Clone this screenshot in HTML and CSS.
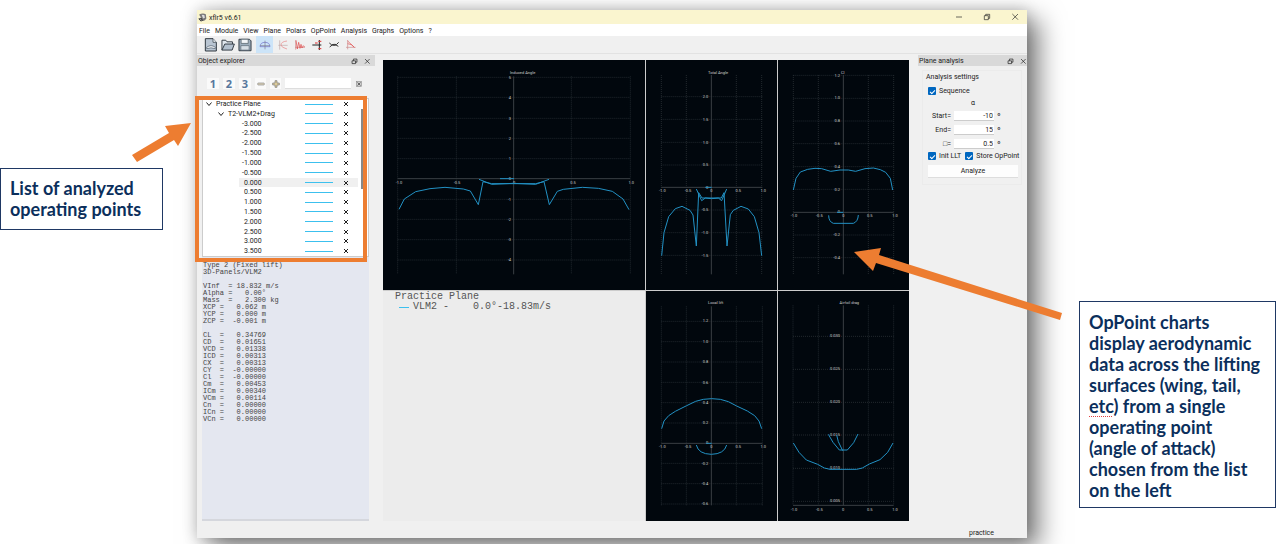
FILE: index.html
```html
<!DOCTYPE html>
<html lang="en">
<head>
<meta charset="utf-8">
<title>xflr5 operating points</title>
<link rel="stylesheet" href="styles.css">
</head>
<body>
<main class="slide">
  <aside class="side side-left"><p class="note">List of analyzed operating points</p></aside>

  <section class="window">
    <header class="titlebar">
      <svg class="logo" viewBox="0 0 30 30"><path d="M4 5q12-6 22-1l2 14q-4 8-11 9l-7-5q-8 0-9-5 6 0 10-3Q6 12 4 5z" fill="#777"/><path d="M12 6l9 1 2 9-6 2z" fill="#ddd"/><path d="M2 20l9-3 6 8-7 3z" fill="#333"/><path d="M7 19l5 6" stroke="#fff" stroke-width="2"/></svg>
      <span class="app-name">xflr5 v6.61</span>
      <div class="win-controls">
        <button aria-label="Minimize"><svg viewBox="0 0 24 24"><path d="M3 12h18"/></svg></button>
        <button aria-label="Restore"><svg viewBox="0 0 24 24"><path d="M4 8h12v12H4zM8 8V4h12v12h-4"/></svg></button>
        <button aria-label="Close"><svg viewBox="0 0 24 24"><path d="M4 3l17 17M21 3L4 20"/></svg></button>
      </div>
    </header>
    <nav class="menubar">
      <button>File</button><button>Module</button><button>View</button><button>Plane</button><button>Polars</button><button>OpPoint</button><button>Analysis</button><button>Graphs</button><button>Options</button><button>?</button>
    </nav>
    <div class="toolbar">
      <button class="file" aria-label="New"><svg viewBox="0 0 40 42"><path d="M3 2h23l10 11v26H3z" fill="#b9c5d2" stroke="#303941" stroke-width="3"/><path d="M26 2v11h10" fill="#e9eef3" stroke="#303941" stroke-width="2"/><path d="M7 28q13-10 26 0v4q-13-5-26 0z" fill="#f4f7fa" stroke="#4b5966"/></svg></button>
      <button class="file" aria-label="Open"><svg viewBox="0 0 44 42"><path d="M3 37V6h12l4 5h17v7" fill="#dfe6ed" stroke="#303941" stroke-width="3"/><path d="M3 37l9-19h30l-7 19z" fill="#b3c0ce" stroke="#303941" stroke-width="3"/></svg></button>
      <button class="file" aria-label="Save"><svg viewBox="0 0 44 42"><path d="M3 3h33l5 5v31H3z" fill="#9daebd" stroke="#303941" stroke-width="3"/><path d="M10 3h22v13H10z" fill="#f2f5f8" stroke="#43505b" stroke-width="2"/><path d="M9 23h26v14H9z" fill="#d7dfe6" stroke="#53616d"/></svg></button>
      <button class="view on" aria-label="Operating point view"><svg viewBox="0 0 36 36"><path d="M3 23q1-13 15-13t15 13z" stroke="#6c6cc8"/><path d="M18 5v26M3 20h30" stroke="#7d7d8d"/></svg></button>
      <button class="view" aria-label="Polar view"><svg viewBox="0 0 36 36"><path d="M8 4v28M4 19h28" stroke="#c0a8a8"/><path d="M30 6Q12 8 12 18q0 7 18 12" stroke="#e78282"/></svg></button>
      <button class="view" aria-label="Time response"><svg viewBox="0 0 36 36"><path d="M5 4v28M3 25h30" stroke="#cf8080"/><path d="M6 4l4 26 4-20 4 18 3-12 3 11 4-7 4 4" stroke="#e04444"/></svg></button>
      <button class="view" aria-label="Stability"><svg viewBox="0 0 36 36"><path d="M25 3v30M4 18h27" stroke="#222" stroke-width="3"/><path d="M12 12h8M22 7h9M22 29h9" stroke="#d33" stroke-width="3"/></svg></button>
      <button class="view" aria-label="Cp view"><svg viewBox="0 0 36 36"><path d="M4 12q7 9 14 4 8 4 14-6M5 24q8-9 13-5 6-3 13 3" stroke="#333" stroke-width="3"/></svg></button>
      <button class="view" aria-label="Cp graph"><svg viewBox="0 0 36 36"><path d="M8 3v28M3 25h29" stroke="#c88"/><path d="M8 6l20 19M8 14q13 1 20 11" stroke="#e34d4d"/></svg></button>
    </div>

    <div class="workspace">
      <section class="dock explorer">
        <header class="dock-head"><h2>Object explorer</h2>
          <button aria-label="Float"><svg viewBox="0 0 20 20"><path d="M3 8h10v8H3zM7 8V3h10v9h-4"/></svg></button>
          <button aria-label="Close"><svg viewBox="0 0 20 20"><path d="M3 3l13 13M16 3L3 16"/></svg></button>
        </header>
        <div class="filter">
          <button>1</button><button>2</button><button>3</button><button class="sign" aria-label="Collapse"><svg viewBox="0 0 24 24"><rect x="2" y="9" width="20" height="6" rx="2" fill="#ddd3b8" stroke="#888"/></svg></button><button class="sign" aria-label="Expand"><svg viewBox="0 0 24 24"><path d="M9 2h6v7h7v6h-7v7H9v-7H2V9h7z" fill="#dccb9b" stroke="#777" stroke-width="2"/></svg></button>
          <input type="text" aria-label="Filter">
          <button class="clear" aria-label="Clear filter"><svg viewBox="0 0 20 20"><rect x="2" y="2" width="16" height="16" fill="#ccc" stroke="#888"/><path d="M5 5l10 10M15 5L5 15"/></svg></button>
        </div>
        <div class="tree-area">
          <ul class="tree" id="tree"></ul>
          <div class="scroll"></div>
          <div class="highlight"></div>
        </div>
        <pre class="details">Type 2 (Fixed lift)
3D-Panels/VLM2

VInf  = 18.832 m/s
Alpha =   0.00°
Mass  =   2.300 kg
XCP =   0.062 m
YCP =   0.000 m
ZCP =  -0.001 m

CL  =   0.34769
CD  =   0.01651
VCD =   0.01338
ICD =   0.00313
CX  =   0.00313
CY  =  -0.00000
Cl  =  -0.00000
Cm  =   0.00453
ICm =   0.00340
VCm =   0.00114
Cn  =   0.00000
ICn =   0.00000
VCn =   0.00000</pre>
      </section>

      <section class="charts">
        <svg class="chart" viewBox="9 15 786 690">
          <path class="grid" d="M53 67H750M53 127H750M53 190H750M53 250H750M53 311H750M53 433H750M53 493H750M53 554H750M53 615H750M53 64V658M229 64V658M574 64V658M751 64V658"/>
          <path class="axis" d="M53 371H750M401 64V658"/>
          <g class="ticks mid"><text x="428" y="56">Induced Angle</text><text x="57" y="387">-1.0</text><text x="231" y="387">-0.5</text><text x="402" y="387">0</text><text x="579" y="387">0.5</text><text x="754" y="387">1.0</text></g>
          <g class="ticks"><text x="393" y="71">5</text><text x="393" y="131">4</text><text x="393" y="194">3</text><text x="393" y="254">2</text><text x="393" y="315">1</text><text x="393" y="375">0</text><text x="393" y="437">-1</text><text x="393" y="497">-2</text><text x="393" y="558">-3</text><text x="393" y="619">-4</text></g>
          <path class="curve" d="M57 463L73 432 107 410 150 401 195 397 250 402 271 408 295 449 309 380 335 386H467L492 380 508 449 532 409 550 403 607 397 655 400 697 409 729 432 747 464M297 373L335 388 400 385 467 388 507 373M360 371H402"/>
        </svg>
        <svg class="chart" viewBox="3 15 393 690">
          <path class="grid" d="M49 125H352M49 193H352M49 262H352M49 330H352M49 465H352M49 533H352M49 601H352M49 60V658M124 60V658M274 60V658M350 60V658"/>
          <path class="axis" d="M49 397H352M199 60V658"/>
          <g class="ticks mid"><text x="219" y="56">Total Angle</text><text x="52" y="412">-1.0</text><text x="129" y="412">-0.5</text><text x="199" y="412">0</text><text x="280" y="412">0.5</text><text x="355" y="412">1.0</text></g>
          <g class="ticks"><text x="190" y="129">2.0</text><text x="190" y="197">1.5</text><text x="190" y="266">1.0</text><text x="190" y="334">0.5</text><text x="190" y="401">0</text><text x="190" y="469">-0.5</text><text x="190" y="537">-1.0</text><text x="190" y="605">-1.5</text></g>
          <path class="curve" d="M50 602L57 533 71 485 91 461 111 454 135 466 144 480 154 573 161 413 171 429H229L237 413 246 573 256 479 265 466 288 454 310 462 328 485 342 533 350 602M154 402L170 437 181 429 200 431 220 429 230 437 245 402M181 397H200"/>
        </svg>
        <svg class="chart" viewBox="399 15 393 690">
          <path class="grid" d="M445 61H746M445 130H746M445 198H746M445 266H746M445 335H746M445 403H746M445 540H746M445 608H746M445 60V658M520 60V658M670 60V658M746 60V658"/>
          <path class="axis" d="M445 472H746M595 60V658"/>
          <g class="ticks mid"><text x="593" y="56">Cl</text><text x="447" y="487">-1.0</text><text x="523" y="487">-0.5</text><text x="595" y="487">0</text><text x="674" y="487">0.5</text><text x="750" y="487">1.0</text></g>
          <g class="ticks"><text x="585" y="65">1.2</text><text x="585" y="133">1.0</text><text x="585" y="202">0.8</text><text x="585" y="270">0.6</text><text x="585" y="338">0.4</text><text x="585" y="407">0.2</text><text x="585" y="475">0</text><text x="585" y="543">-0.2</text><text x="585" y="612">-0.4</text></g>
          <path class="curve" d="M445 405L453 370 466 351 488 343 510 340 530 341 557 349 585 345H610L632 349 660 341 685 339 706 344 722 352 736 370 743 405M551 481Q551 500 565 505H625Q639 500 640 480M576 472H595"/>
        </svg>
        <div class="legend"><p>Practice Plane</p><p class="series"><span class="swatch"></span>VLM2 -&nbsp;&nbsp;&nbsp; 0.0°-18.83m/s</p></div>
        <svg class="chart" viewBox="3 9 393 690">
          <path class="grid" d="M49 100H352M49 161H352M49 222H352M49 283H352M49 344H352M49 405H352M49 526H352M49 587H352M49 648H352M49 55V652M124 55V652M274 55V652M352 55V652"/>
          <path class="axis" d="M49 466H352M199 55V652"/>
          <g class="ticks mid"><text x="212" y="49">Local lift</text><text x="52" y="480">-1.0</text><text x="129" y="480">-0.5</text><text x="199" y="480">0</text><text x="280" y="480">0.5</text><text x="355" y="480">1.0</text></g>
          <g class="ticks"><text x="190" y="103">1.2</text><text x="190" y="165">1.0</text><text x="190" y="226">0.8</text><text x="190" y="287">0.6</text><text x="190" y="348">0.4</text><text x="190" y="409">0.2</text><text x="190" y="469">0</text><text x="190" y="530">-0.2</text><text x="190" y="591">-0.4</text><text x="190" y="651">-0.6</text></g>
          <path class="curve" d="M50 422L57 399 71 383 91 370 125 353 152 340 175 334 200 332 226 334 250 341 275 354 307 369 329 383 342 399 350 422M154 471Q160 498 199 499 238 498 245 471M184 466H200"/>
        </svg>
        <svg class="chart" viewBox="399 9 393 690">
          <path class="grid" d="M444 145H746M444 244H746M444 343H746M444 441H746M444 541H746M444 640H746M444 52V652M520 52V652M670 52V652M746 52V652"/>
          <path class="axis" d="M444 652H746M595 52V652"/>
          <g class="ticks mid"><text x="613" y="49">Airfoil drag</text><text x="447" y="668">-1.0</text><text x="523" y="668">-0.5</text><text x="594" y="668">0</text><text x="674" y="668">0.5</text><text x="750" y="668">1.0</text></g>
          <g class="ticks"><text x="585" y="148">0.030</text><text x="585" y="247">0.025</text><text x="585" y="346">0.020</text><text x="585" y="445">0.015</text><text x="585" y="544">0.010</text><text x="585" y="642">0.005</text></g>
          <path class="curve" d="M445 465L462 493 484 516 518 529 538 540 555 544H635L652 540 673 528 705 515 728 493 744 465M550 439L564 463 583 486H607L626 464 639 438M575 441L580 461 593 488"/>
        </svg>
      </section>

      <section class="dock analysis">
        <header class="dock-head"><h2>Plane analysis</h2>
          <button aria-label="Float"><svg viewBox="0 0 20 20"><path d="M3 8h10v8H3zM7 8V3h10v9h-4"/></svg></button>
          <button aria-label="Close"><svg viewBox="0 0 20 20"><path d="M3 3l13 13M16 3L3 16"/></svg></button>
        </header>
        <form class="settings">
          <h3>Analysis settings</h3>
          <label class="check"><input type="checkbox" checked>Sequence</label>
          <p class="alpha">α</p>
          <div class="field"><label for="start">Start=</label><input id="start" type="text" value="-10"><span>°</span></div>
          <div class="field"><label for="end">End=</label><input id="end" type="text" value="15"><span>°</span></div>
          <div class="field"><label for="step">□=</label><input id="step" type="text" value="0.5"><span>°</span></div>
          <div class="checks"><label class="check"><input type="checkbox" checked>Init LLT</label><label class="check"><input type="checkbox" checked>Store OpPoint</label></div>
          <button class="analyze" type="button">Analyze</button>
        </form>
      </section>
    </div>
    <footer class="status">practice</footer>

    <svg class="arrow arrow-list" viewBox="131 122 62 42"><path d="M191 123L165 126 169 133 132 155 137 162 174 140 178 146z"/></svg>
    <svg class="arrow arrow-chart" viewBox="853 246 210 76"><path d="M854 252L881 248 879 255 1062 313 1060 320 876 263 873 271z"/></svg>
  </section>

  <aside class="side side-right"><p class="note">OpPoint charts display aerodynamic data across the lifting surfaces (wing, tail, <span class="typo">etc</span>) from a single operating point (angle of attack) chosen from the list on the left</p></aside>
</main>
<script src="tree.js"></script>
</body>
</html>
```
FILE: styles.css
```css
* { box-sizing: border-box; }
body { margin: 0; background: #fff; overflow: hidden; font-family: Roboto, "Open Sans", sans-serif; font-size: 7px; line-height: 10px; color: #222; }
h2, h3, p, ul, pre { margin: 0; padding: 0; font-size: inherit; font-weight: 400; }
button, input { font: inherit; color: inherit; padding: 0; border: 0; background: none; }
svg { display: block; }
button svg { fill: none; stroke: #222; stroke-width: 2; }

.slide { display: flex; padding-top: 10px; min-height: 544px; align-items: flex-start; }
.side { flex: none; }
.side-left { width: 197px; padding: 158px 34px 0 0; }
.side-right { width: 253px; padding: 291px 4px 0 52px; }
.note { padding: 9px 14px 9px 9px; border: 1px solid #1f3864; background: #fff; color: #0b2f5c; font-family: Lato, sans-serif; font-weight: 700; font-size: 18px; line-height: 21px; }
.side-right .note { padding-bottom: 6px; padding-top: 10px; }
.typo { text-decoration: underline dotted #e04040 1px; text-underline-offset: 3px; }

.window { position: relative; flex: 1; min-width: 0; background: #f0f0f0; box-shadow: 12px 10px 24px rgba(0, 0, 0, .5), 0 0 14px rgba(0, 0, 0, .2); }
.titlebar { display: flex; align-items: center; gap: 2px; height: 14px; padding-left: 1px; background: #faf5cf; }
.logo { width: 9px; height: 9px; }
.app-name { flex: 1; padding-top: 1px; }
.win-controls { display: flex; gap: 20px; padding-right: 8px; }
.win-controls svg { width: 8px; height: 8px; }
.menubar { display: flex; gap: 5px; height: 12px; padding: 1px 0 0 2px; background: #fff; }
.toolbar { display: flex; align-items: center; gap: 3px; height: 18px; padding-left: 7px; border-bottom: 1px solid #e2e2e2; }
.file svg { width: 14px; height: 14px; }
.view { display: grid; place-items: center; width: 14px; height: 17px; }
.view svg { width: 12px; height: 12px; }
.on { width: 17px; margin-left: 1px; background: #cce4f8; }

.workspace { display: flex; align-items: stretch; padding-top: 1px; }
.dock { flex: none; }
.explorer { display: flex; flex-direction: column; width: 178px; }
.dock-head { display: flex; align-items: center; gap: 6px; height: 11px; padding: 1px 4px 0 1px; background: #d9d9d9; }
.dock-head h2 { flex: 1; }
.dock-head svg { width: 7px; height: 7px; }
.analysis .dock-head { padding-right: 0; }
.filter { display: flex; align-items: center; gap: 4px; padding: 12px 12px 0 10px; }
.filter button { display: grid; place-items: center; width: 12px; height: 11px; background: #fafafa; font: 700 11px/11px "Noto Sans", sans-serif; color: #58779c; }
.filter .sign { width: 11px; }
.filter svg { width: 8px; height: 8px; }
.filter input { flex: 1; min-width: 0; height: 11px; background: #fff; border-bottom: 1px solid #ddd; }
.filter .clear { width: 8px; background: none; }
.filter .clear svg { width: 6px; height: 6px; }

.tree-area { position: relative; margin: 9px 6px 0 5px; background: #fff; border: 1px solid #ccc; }
.tree { display: grid; grid-auto-rows: minmax(0, 1fr); height: 157px; line-height: 10px; list-style: none; }
.tree li { display: grid; grid-template-columns: 37px 1fr 28px 25px; align-items: center; padding-right: 10px; }
.tree .name { grid-column: 1 / 3; display: flex; align-items: center; gap: 4px; padding-left: 3px; }
.tree .level-1 .name { padding-left: 15px; }
.tree .level-2 .name { display: block; padding-left: 39px; }
.tree .plus .name { padding-left: 41px; }
.tree .selected { background: linear-gradient(#f0f0f0, #f0f0f0) 36px 0 / 119px 100% no-repeat; }
.tree .name svg { width: 6px; height: 6px; fill: none; stroke: #222; stroke-width: 2; }
.line { height: 1px; background: #3cc0ee; }
.tree button { display: grid; place-items: center; }
.tree button svg { width: 6px; height: 6px; }
.scroll { position: absolute; right: 5px; top: 10px; width: 2px; height: 80px; background: #888; }
.highlight { position: absolute; inset: -3px 1px -6px -8px; border: 4px solid #ed7d31; }
.details { flex: 1; margin: 0 6px 0 5px; padding: 5px 1px 0; background: #e4e7f0; border-bottom: 2px solid #d5d7dd; font: 7px/7px "Liberation Mono", monospace; color: #444; }

.charts { flex: 1; min-width: 0; display: grid; grid-template-columns: 2fr 1fr 1fr; gap: 1px; margin: 5px 9px 0 8px; background: #ccc; }
.chart { width: 100%; background: #01070d; }
.grid, .axis, .curve { fill: none; }
.grid { stroke: #333a3f; stroke-width: 2; stroke-dasharray: 3 3; }
.axis { stroke: #3a3f44; stroke-width: 3; }
.curve { stroke: #2291c4; stroke-width: 3; stroke-linejoin: round; }
.ticks { font-size: 12px; fill: #ccc; text-anchor: end; }
.mid { text-anchor: middle; }
.legend { padding: 1px 12px; background: #ececec; font: 10px/10px "Liberation Mono", monospace; color: #555; }
.series { display: flex; align-items: center; gap: 4px; padding-left: 4px; white-space: pre; }
.swatch { width: 10px; height: 1px; background: #3cc0ee; }

.analysis { width: 109px; }
.settings { margin: 4px 5px 0 4px; padding: 1px 3px 6px 5px; border: 1px solid #ebebeb; }
.settings h3 { margin-left: -2px; }
.check { display: flex; align-items: center; gap: 3px; }
.settings > .check { margin-top: 4px; }
.check input { appearance: none; display: grid; place-items: center; width: 8px; height: 8px; margin: 0; background: #0067c0; border-radius: 1px; }
.check input::after { content: ""; width: 4px; height: 2px; border: solid #fff; border-width: 0 0 1px 1px; transform: rotate(-45deg); }
.alpha { padding: 2px 0 1px; text-align: center; }
.field { display: grid; grid-template-columns: 23px 40px 1fr; gap: 3px; align-items: center; height: 10px; margin-bottom: 4px; }
.field label { text-align: right; }
.field span { padding-top: 4px; font-size: 10px; }
.field input { width: 100%; height: 10px; padding-right: 1px; text-align: right; background: #fff; border-bottom: 1px solid #ccc; }
.checks { display: flex; gap: 4px; white-space: nowrap; }
.analyze { display: block; width: 100%; height: 13px; margin-top: 4px; background: #fdfdfd; border-bottom: 1px solid #ddd; }
.status { padding: 7px 33px 0 0; text-align: right; }

.arrow { position: absolute; fill: #ed7d31; }
.arrow-list { left: -66px; top: 112px; width: 62px; }
.arrow-chart { right: -36px; top: 236px; width: 210px; }
```
FILE: tree.js
```js
const names = ["Practice Plane", "T2-VLM2+Drag", "-3.000", "-2.500", "-2.000", "-1.500", "-1.000", "-0.500",
  "0.000", "0.500", "1.000", "1.500", "2.000", "2.500", "3.000", "3.500"];
const chevron = '<svg viewBox="0 0 12 12"><path d="M1 3l5 6 5-6"/></svg>';
const cross = '<svg viewBox="0 0 12 12"><path d="M2 2l8 8M10 2l-8 8"/></svg>';
document.getElementById("tree").innerHTML = names.map((name, i) => {
  const level = Math.min(i, 2);
  const cls = `level-${level}${i > 7 ? " plus" : ""}${i === 8 ? " selected" : ""}`;
  return `<li class="${cls}"><span class="name">${level < 2 ? chevron : ""}${name}</span><span class="line"></span><button aria-label="Toggle ${name}">${cross}</button></li>`;
}).join("");
```
